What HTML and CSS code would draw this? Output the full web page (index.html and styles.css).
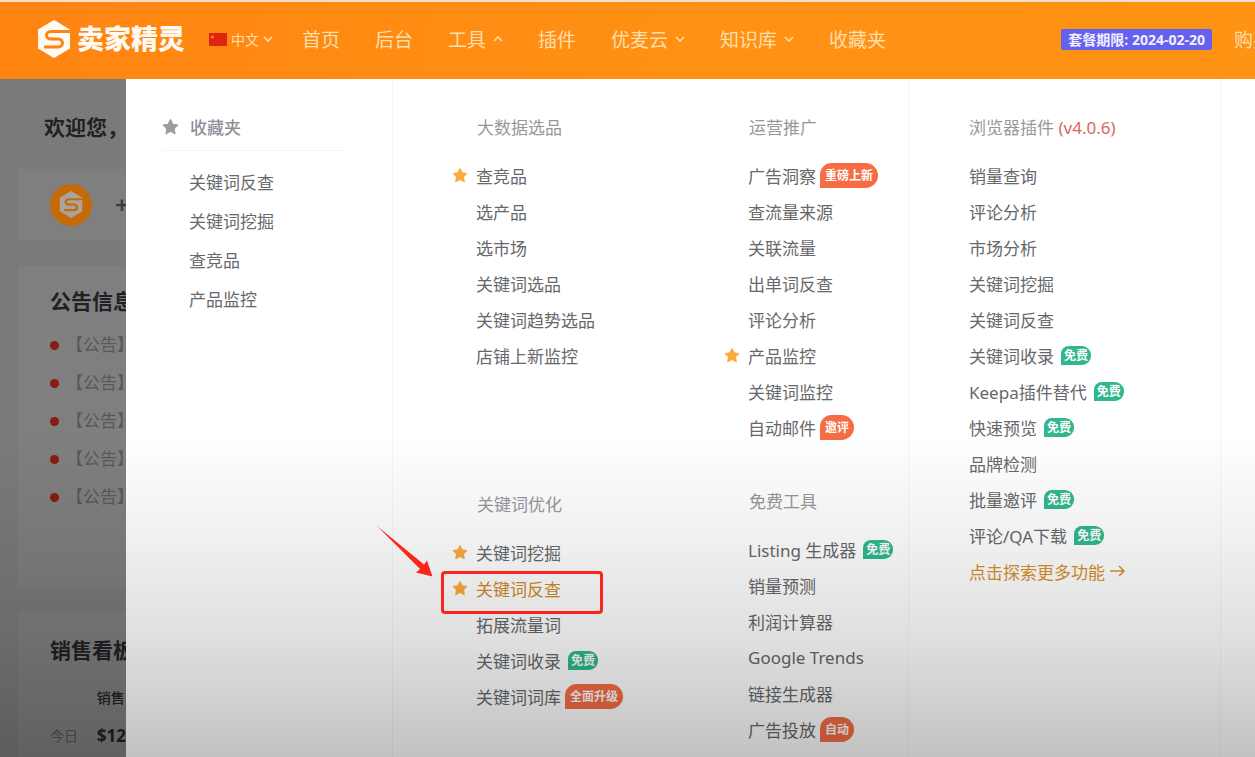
FILE: index.html
```html
<!DOCTYPE html>
<html lang="zh-CN">
<head>
<meta charset="utf-8">
<meta name="viewport" content="width=device-width, initial-scale=1">
<title>卖家精灵</title>
<link rel="stylesheet" href="styles.css">
</head>
<body>
<svg class="defs" width="0" height="0" aria-hidden="true">
  <symbol id="star" viewBox="0 0 16 16"><path d="M8 1.500l2.200 4.300 4.800.7-3.500 3.400.8 4.900L8 12.500l-4.300 2.300.8-4.900L1 6.500l4.800-.7z" stroke-linejoin="round"/></symbol>
  <symbol id="down" viewBox="0 0 10 6"><path d="M1 1l4 4 4-4" fill="none" stroke="currentColor" stroke-width="1.600"/></symbol>
  <symbol id="up" viewBox="0 0 10 6"><path d="M1 5l4-4 4 4" fill="none" stroke="currentColor" stroke-width="1.600"/></symbol>
  <symbol id="mark" viewBox="0 0 34 38">
    <path d="M17 1l15 9v18l-15 9L2 28V10z" fill="currentColor" stroke="currentColor" stroke-width="2" stroke-linejoin="round"/>
    <path class="mark-line" d="M34 11.500H14c-6 0-6 7.500 0 7.500h7c6 0 6 8 0 8H7" fill="none" stroke-width="3"/>
  </symbol>
</svg>
<div class="page">
  <header class="header">
    <a class="logo" href="#"><svg class="logo-mark"><use href="#mark"/></svg><span>卖家精灵</span></a>
    <button class="lang" type="button">
      <svg class="flag" viewBox="0 0 18 13"><path d="M0 0h18v13H0z" fill="#e02410"/><path d="M3.500 2l.6 1.500h1.600l-1.300 1 .5 1.500-1.400-.9-1.400.9.500-1.500-1.300-1h1.600z" fill="#ff9a20"/></svg>
      <span>中文</span><svg class="chevron"><use href="#down"/></svg>
    </button>
    <nav class="nav">
      <a href="#">首页</a>
      <a href="#">后台</a>
      <a href="#">工具<svg class="chevron"><use href="#up"/></svg></a>
      <a href="#">插件</a>
      <a href="#">优麦云<svg class="chevron"><use href="#down"/></svg></a>
      <a href="#">知识库<svg class="chevron"><use href="#down"/></svg></a>
      <a href="#">收藏夹</a>
    </nav>
    <div class="account"><span class="plan">套餐期限: 2024-02-20</span><a class="buy" href="#">购买</a></div>
  </header>

  <div class="body">
    <main class="dashboard">
      <h1 class="welcome">欢迎您，</h1>
      <section class="card card-user">
        <span class="avatar"><svg class="avatar-mark"><use href="#mark"/></svg></span><span class="plus">+</span>
      </section>
      <section class="card card-news">
        <h2 class="card-title">公告信息</h2>
        <ul class="news">
          <li>【公告】</li><li>【公告】</li><li>【公告】</li><li>【公告】</li><li>【公告】</li>
        </ul>
      </section>
      <section class="card card-sales">
        <h2 class="card-title">销售看板</h2>
        <table class="sales">
          <tr><td></td><th scope="col">销售</th></tr>
          <tr><th class="day" scope="row">今日</th><td class="amount">$12</td></tr>
        </table>
      </section>
    </main>

    <div class="menu">
      <section class="favorites">
        <h2 class="fav-title"><svg class="star"><use href="#star"/></svg>收藏夹</h2>
        <ul class="fav-list">
          <li><a href="#">关键词反查</a></li>
          <li><a href="#">关键词挖掘</a></li>
          <li><a href="#">查竞品</a></li>
          <li><a href="#">产品监控</a></li>
        </ul>
      </section>

      <div class="tools">
        <section class="group">
          <h3>大数据选品</h3>
          <ul>
            <li class="starred"><svg class="star"><use href="#star"/></svg><a href="#">查竞品</a></li>
            <li><a href="#">选产品</a></li>
            <li><a href="#">选市场</a></li>
            <li><a href="#">关键词选品</a></li>
            <li><a href="#">关键词趋势选品</a></li>
            <li><a href="#">店铺上新监控</a></li>
          </ul>
        </section>
        <section class="group">
          <h3>运营推广</h3>
          <ul>
            <li><a href="#">广告洞察</a><span class="tag tag-hot">重磅上新</span></li>
            <li><a href="#">查流量来源</a></li>
            <li><a href="#">关联流量</a></li>
            <li><a href="#">出单词反查</a></li>
            <li><a href="#">评论分析</a></li>
            <li class="starred"><svg class="star"><use href="#star"/></svg><a href="#">产品监控</a></li>
            <li><a href="#">关键词监控</a></li>
            <li><a href="#">自动邮件</a><span class="tag tag-hot">邀评</span></li>
          </ul>
        </section>
        <section class="group group-keywords">
          <h3>关键词优化</h3>
          <ul>
            <li class="starred"><svg class="star"><use href="#star"/></svg><a href="#">关键词挖掘</a></li>
            <li class="starred current"><svg class="star"><use href="#star"/></svg><a href="#">关键词反查</a>
              <span class="frame"></span>
              <svg class="arrow" viewBox="0 0 56 51"><path d="M0 0L47 38.500 50 34.500 55.500 50.500 39 46.500 43 43z" fill="#f8271b"/></svg>
            </li>
            <li><a href="#">拓展流量词</a></li>
            <li><a href="#">关键词收录</a><span class="tag tag-free">免费</span></li>
            <li><a href="#">关键词词库</a><span class="tag tag-hot">全面升级</span></li>
          </ul>
        </section>
        <section class="group">
          <h3>免费工具</h3>
          <ul>
            <li><a href="#">Listing 生成器</a><span class="tag tag-free">免费</span></li>
            <li><a href="#">销量预测</a></li>
            <li><a href="#">利润计算器</a></li>
            <li><a href="#">Google Trends</a></li>
            <li><a href="#">链接生成器</a></li>
            <li><a href="#">广告投放</a><span class="tag tag-hot">自动</span></li>
          </ul>
        </section>
      </div>

      <section class="group plugins">
        <h3>浏览器插件 <span class="version">(v4.0.6)</span></h3>
        <ul>
          <li><a href="#">销量查询</a></li>
          <li><a href="#">评论分析</a></li>
          <li><a href="#">市场分析</a></li>
          <li><a href="#">关键词挖掘</a></li>
          <li><a href="#">关键词反查</a></li>
          <li><a href="#">关键词收录</a><span class="tag tag-free">免费</span></li>
          <li><a href="#">Keepa插件替代</a><span class="tag tag-free">免费</span></li>
          <li><a href="#">快速预览</a><span class="tag tag-free">免费</span></li>
          <li><a href="#">品牌检测</a></li>
          <li><a href="#">批量邀评</a><span class="tag tag-free">免费</span></li>
          <li><a href="#">评论/QA下载</a><span class="tag tag-free">免费</span></li>
          <li class="more"><a href="#">点击探索更多功能</a><svg class="more-arrow" viewBox="0 0 16 12"><path d="M0 6h14M9 1l5 5-5 5" fill="none" stroke="currentColor" stroke-width="1.500"/></svg></li>
        </ul>
      </section>
    </div>
  </div>
</div>
</body>
</html>
```

FILE: styles.css
```css
* { box-sizing: border-box; }

body {
  margin: 0;
  font-family: "Noto Sans", "Noto Sans CJK SC", sans-serif;
  font-size: 17px;
  color: #66686c;
}

h1, h2, h3, ul { margin: 0; padding: 0; font-size: 17px; }
ul { list-style: none; }
a { color: inherit; text-decoration: none; }
svg { flex: none; }
.defs { position: absolute; }

.page {
  display: flex;
  flex-direction: column;
  min-height: 100vh;
  overflow: hidden;
}

/* Header */
.header {
  display: flex;
  align-items: center;
  height: 79px;
  padding-left: 37px;
  padding-bottom: 3px;
  border-top: 2px solid #f3dfc8;
  background: linear-gradient(100deg, #ff8412, #ff9214 60%, #ff9314);
  color: #ffdfae;
  white-space: nowrap;
  overflow: hidden;
}

.logo {
  display: flex;
  align-items: center;
  gap: 6px;
  color: #fffaf2;
  font-size: 27px;
  font-weight: 900;
  line-height: 36px;
}
.logo-mark { width: 34px; height: 38px; }
.mark-line { stroke: var(--line, #ff8412); }

.lang {
  display: flex;
  align-items: center;
  gap: 4px;
  margin-left: 24px;
  padding: 0;
  border: 0;
  background: none;
  color: inherit;
  font: inherit;
  font-size: 14px;
}
.flag { width: 18px; height: 13px; }
.chevron { width: 10px; height: 6px; }

.nav {
  display: flex;
  gap: 35px;
  margin-left: 29px;
  font-size: 19px;
}
.nav a { display: flex; align-items: center; gap: 7px; }

.account {
  display: flex;
  align-items: center;
  gap: 22px;
  margin-left: auto;
  margin-right: -17px;
  font-size: 19px;
}
.plan {
  padding: 0 7px;
  border-radius: 2px;
  background: #6560f0;
  color: #f4efff;
  font-family: "Open Sans", "Noto Sans CJK SC", sans-serif;
  font-size: 14px;
  font-weight: 700;
  line-height: 21px;
}

/* Content under the header */
.body {
  position: relative;
  display: flex;
  flex: 1;
}
.body::after {
  content: "";
  position: absolute;
  inset: 0;
  background: linear-gradient(transparent 52%, rgba(0, 0, 0, .05) 66%, rgba(0, 0, 0, .12) 82%, rgba(0, 0, 0, .24));
  pointer-events: none;
}

.dashboard {
  display: flex;
  flex-direction: column;
  width: 126px;
  padding: 31px 0 0 18px;
  background: #7a7a7a;
  color: #202124;
  white-space: nowrap;
  overflow: hidden;
}
.welcome {
  padding-left: 26px;
  font-size: 21px;
  line-height: 34px;
}
.card { background: #7f7f7f; padding-left: 32px; }
.card-title { font-size: 21px; line-height: 34px; }
.card-user {
  display: flex;
  align-items: center;
  gap: 23px;
  height: 71px;
  margin-top: 25px;
}
.avatar {
  --line: #c46a08;
  display: flex;
  flex: none;
  align-items: center;
  justify-content: center;
  width: 42px;
  height: 42px;
  border-radius: 50%;
  background: #c46a08;
  color: #aaa49c;
}
.avatar-mark { width: 24px; height: 27px; }
.plus { color: #3a3b3d; font-size: 24px; font-weight: 600; }
.card-news { margin-top: 26px; padding-top: 18px; padding-bottom: 71px; }
.news { padding-top: 8px; color: #57595b; }
.news li {
  display: flex;
  align-items: center;
  gap: 7px;
  line-height: 38px;
}
.news li::before {
  content: "";
  flex: none;
  width: 9px;
  height: 9px;
  border-radius: 50%;
  background: #881c12;
}
.card-sales { flex: 1; margin-top: 24px; padding-top: 22px; }
.sales {
  margin-top: 12px;
  border-collapse: collapse;
  font-size: 14px;
  line-height: 38px;
}
.sales td, .sales th { padding: 0; font-weight: 500; text-align: left; }
.sales .day { width: 49px; color: #505254; font-weight: 400; }
.sales .amount { font-size: 17px; font-weight: 700; }

/* Mega menu */
.menu {
  display: grid;
  flex: 1;
  grid-template-columns: 267px 516px 312px 1fr;
  background: #fff;
  white-space: nowrap;
}
.favorites, .tools, .plugins {
  padding-top: 31px;
  border-right: 1px solid #f3f3f4;
}

.star { width: 16px; height: 16px; fill: #fbab3c; stroke: #fbab3c; }

.favorites { padding-left: 36px; padding-right: 48px; }
.fav-title {
  display: flex;
  align-items: center;
  gap: 11px;
  height: 41px;
  padding-bottom: 8px;
  border-bottom: 1px solid #f6f6f7;
  color: #8d9096;
  font-weight: 500;
}
.fav-title .star { width: 17px; height: 17px; fill: #9b9da1; stroke: #9b9da1; }
.fav-list { padding: 12px 0 0 27px; line-height: 39px; }

.tools {
  display: grid;
  grid-template-columns: 272px 1fr;
  align-content: start;
  row-gap: 39px;
  padding-left: 59px;
}
.group h3 {
  margin-bottom: 11px;
  padding-left: 25px;
  color: #96989d;
  font-weight: 400;
  line-height: 36px;
}
.group li {
  display: flex;
  align-items: center;
  height: 36px;
  padding-left: 24px;
}
.group .starred { gap: 8px; padding-left: 0; }
.group-keywords { padding-top: 3px; }
.plugins h3, .plugins li { padding-left: 0; }
.plugins { padding-left: 60px; }
.version { color: #d9695c; }

.group .current { position: relative; color: #d0872c; }
.frame {
  position: absolute;
  z-index: 2;
  top: 1px;
  left: -11px;
  width: 162px;
  height: 43px;
  border: 3px solid #f8271b;
  border-radius: 4px;
}
.arrow {
  position: absolute;
  z-index: 2;
  top: -44px;
  left: -75px;
  width: 56px;
  height: 51px;
}

.tag {
  color: #fff;
  font-size: 12px;
  font-weight: 700;
}
.tag-free {
  margin-left: 7px;
  padding: 0 3px;
  border-radius: 8px 9px 9px 0;
  background: #2fb88d;
  line-height: 19px;
}
.tag-hot {
  margin-left: 4px;
  padding: 0 5px;
  border-radius: 12px 13px 13px 0;
  background: #f66d45;
  line-height: 25px;
}

.group .more { gap: 5px; color: #d6912e; }
.more-arrow { width: 16px; height: 12px; }
```
